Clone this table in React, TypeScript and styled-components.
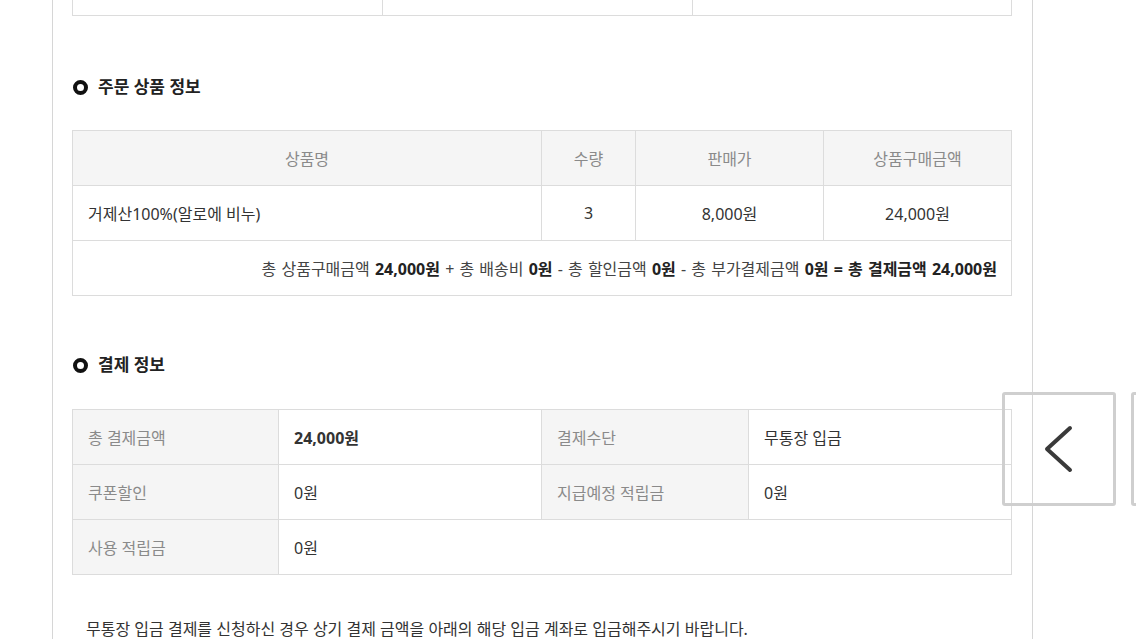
import React from 'react';
import styled, { createGlobalStyle } from 'styled-components';

const GlobalStyle = createGlobalStyle`
  html, body {
    margin: 0;
    padding: 0;
    background: #ffffff;
    overflow: hidden;
  }
  body {
    font-family: "Noto Sans", "Noto Sans CJK KR", sans-serif;
    color: #333333;
  }
`;

const Page = styled.div`
  position: relative;
  width: 1136px;
  height: 640px;
  overflow: hidden;
  padding-left: 52px;
  box-sizing: border-box;
`;

const Container = styled.div`
  width: 981px;
  box-sizing: border-box;
  border-left: 1px solid #d6d6d6;
  border-right: 1px solid #d6d6d6;
  padding: 0 20px 0 19px;
  min-height: 640px;
`;

const ScrolledTop = styled.div`
  margin-top: -40px;
`;

const Section = styled.section<{ $top: number; $gap: number }>`
  margin-top: ${(p) => p.$top}px;
  h3 {
    margin-bottom: ${(p) => p.$gap}px;
  }
`;

const Heading = styled.h3`
  display: flex;
  align-items: center;
  gap: 10px;
  margin: 0 0 31px 1px;
  font-size: 17px;
  line-height: 24px;
  font-weight: 700;
  color: #222222;
`;

const Ring = styled.span`
  width: 15px;
  height: 15px;
  border: 4px solid #111111;
  border-radius: 50%;
  box-sizing: border-box;
`;

const Table = styled.table`
  width: 940px;
  border-collapse: collapse;
  table-layout: fixed;
  font-size: 16px;
  border: 1px solid #dcdcdc;
`;

const Th = styled.th<{ $align?: 'left' | 'center' }>`
  height: 54px;
  padding: 0 15px;
  background: #f5f5f5;
  border: 1px solid #dcdcdc;
  color: #8a8a8a;
  font-weight: 400;
  text-align: ${(p) => p.$align || 'center'};
`;

const Td = styled.td<{ $align?: 'left' | 'center' | 'right'; $bold?: boolean }>`
  height: 54px;
  padding: 0 15px;
  border: 1px solid #dcdcdc;
  color: #333333;
  font-weight: ${(p) => (p.$bold ? 700 : 400)};
  text-align: ${(p) => p.$align || 'left'};
`;

const Summary = styled.td`
  height: 54px;
  padding: 0 14px;
  border: 1px solid #dcdcdc;
  text-align: right;
  color: #444444;
  word-spacing: 1px;
  b {
    color: #222222;
    font-weight: 700;
  }
`;

const Notice = styled.p`
  margin: 44px 0 0 14px;
  font-size: 16px;
  line-height: 20px;
  color: #333333;
`;

const NavButton = styled.button<{ $left: number }>`
  position: absolute;
  top: 392px;
  left: ${(p) => p.$left}px;
  width: 114px;
  height: 114px;
  padding: 0;
  border: 3px solid #cfcfcf;
  border-radius: 3px;
  background: transparent;
  display: flex;
  align-items: center;
  justify-content: center;
`;

const Chevron = () => (
  <svg width="40" height="50" viewBox="0 0 40 50" fill="none">
    <path
      d="M31 4 L8 25 L31 46"
      stroke="#3a3a3a"
      strokeWidth="4"
      strokeLinecap="round"
      strokeLinejoin="round"
    />
  </svg>
);

export default function App() {
  return (
    <>
      <GlobalStyle />
      <Page>
        <Container>
          <ScrolledTop>
            <Table>
              <colgroup>
                <col style={{ width: '310px' }} />
                <col style={{ width: '310px' }} />
                <col />
              </colgroup>
              <tbody>
                <tr>
                  <Td />
                  <Td />
                  <Td />
                </tr>
              </tbody>
            </Table>
          </ScrolledTop>

          <Section $top={59} $gap={31}>
            <Heading>
              <Ring />
              주문 상품 정보
            </Heading>
            <Table>
              <colgroup>
                <col style={{ width: '469px' }} />
                <col style={{ width: '94px' }} />
                <col style={{ width: '188px' }} />
                <col />
              </colgroup>
              <thead>
                <tr>
                  <Th>상품명</Th>
                  <Th>수량</Th>
                  <Th>판매가</Th>
                  <Th>상품구매금액</Th>
                </tr>
              </thead>
              <tbody>
                <tr>
                  <Td>거제산100%(알로에 비누)</Td>
                  <Td $align="center">3</Td>
                  <Td $align="center">8,000원</Td>
                  <Td $align="center">24,000원</Td>
                </tr>
                <tr>
                  <Summary colSpan={4}>
                    총 상품구매금액 <b>24,000원</b> + 총 배송비 <b>0원</b> - 총
                    할인금액 <b>0원</b> - 총 부가결제금액 <b>0원</b>{' '}
                    <b>= 총 결제금액 24,000원</b>
                  </Summary>
                </tr>
              </tbody>
            </Table>
          </Section>

          <Section $top={57} $gap={32}>
            <Heading>
              <Ring />
              결제 정보
            </Heading>
            <Table>
              <colgroup>
                <col style={{ width: '206px' }} />
                <col style={{ width: '263px' }} />
                <col style={{ width: '207px' }} />
                <col />
              </colgroup>
              <tbody>
                <tr>
                  <Th $align="left">총 결제금액</Th>
                  <Td $bold>24,000원</Td>
                  <Th $align="left">결제수단</Th>
                  <Td>무통장 입금</Td>
                </tr>
                <tr>
                  <Th $align="left">쿠폰할인</Th>
                  <Td>0원</Td>
                  <Th $align="left">지급예정 적립금</Th>
                  <Td>0원</Td>
                </tr>
                <tr>
                  <Th $align="left">사용 적립금</Th>
                  <Td colSpan={3}>0원</Td>
                </tr>
              </tbody>
            </Table>
          </Section>

          <Notice>
            무통장 입금 결제를 신청하신 경우 상기 결제 금액을 아래의 해당 입금
            계좌로 입금해주시기 바랍니다.
          </Notice>
        </Container>

        <NavButton $left={1002} aria-label="이전">
          <Chevron />
        </NavButton>
        <NavButton $left={1131} aria-label="다음" />
      </Page>
    </>
  );
}
